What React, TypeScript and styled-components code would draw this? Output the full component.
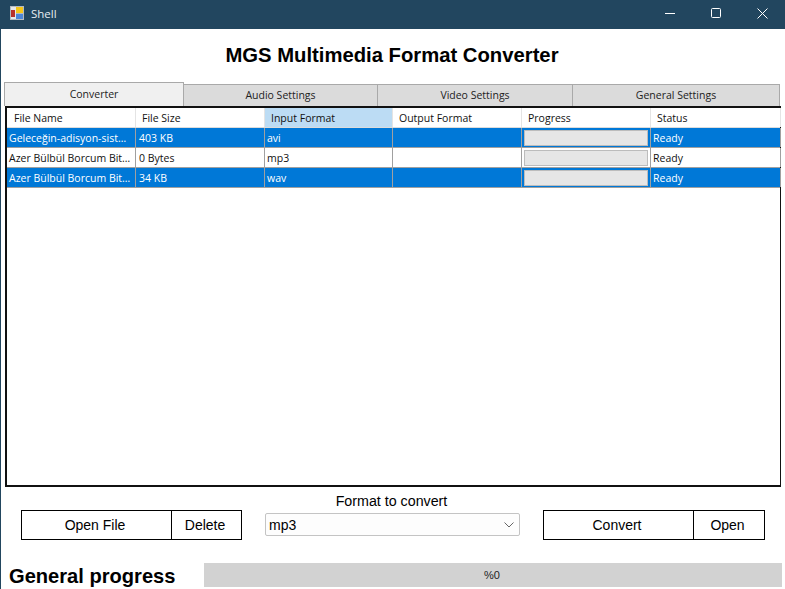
import React from "react";
import styled, { createGlobalStyle } from "styled-components";

const COLUMNS = [
  { title: "File Name", width: 129 },
  { title: "File Size", width: 129 },
  { title: "Input Format", width: 128, sorted: true },
  { title: "Output Format", width: 129 },
  { title: "Progress", width: 129 },
  { title: "Status", width: 130 },
];

const ROWS = [
  { name: "Geleceğin-adisyon-sist…", size: "403 KB", format: "avi", selected: true },
  { name: "Azer Bülbül Borcum Bit…", size: "0 Bytes", format: "mp3", selected: false },
  { name: "Azer Bülbül Borcum Bit…", size: "34 KB", format: "wav", selected: true },
];

const TABS = [
  { label: "Converter", width: 180, active: true },
  { label: "Audio Settings", width: 195 },
  { label: "Video Settings", width: 196 },
  { label: "General Settings", width: 208 },
];

const GRID_TEMPLATE = COLUMNS.map((c) => `${c.width}px`).join(" ");

const GlobalStyle = createGlobalStyle`
  html, body {
    margin: 0;
    padding: 0;
    background: #fff;
  }
  * {
    box-sizing: border-box;
  }
`;

const Win = styled.div`
  width: 785px;
  height: 589px;
  display: flex;
  flex-direction: column;
  overflow: hidden;
  background: #fff;
  border-left: 1px solid #22465f;
  font-family: "Liberation Sans", Arial, sans-serif;
  color: #000;
`;

const TitleBar = styled.div`
  height: 29px;
  margin-left: -1px;
  flex-shrink: 0;
  display: flex;
  align-items: center;
  padding: 0 0 3px 10px;
  background: #22465f;
  color: #e8eef2;
  font-family: "Open Sans", sans-serif;
  font-size: 11.5px;
`;

const AppName = styled.span`
  margin-left: 7px;
  flex: 1;
`;

const WinButton = styled.div`
  width: 46px;
  height: 26px;
  display: flex;
  align-items: center;
  justify-content: center;
`;

const Heading = styled.h1`
  height: 53px;
  margin: 0;
  flex-shrink: 0;
  display: flex;
  align-items: center;
  justify-content: center;
  padding: 0 2px 1px 0;
  font-size: 20.25px;
  font-weight: 700;
`;

const TabStrip = styled.div`
  height: 24px;
  flex-shrink: 0;
  display: flex;
  align-items: flex-start;
  padding-left: 3px;
`;

const Tab = styled.div<{ $active?: boolean; $width: number }>`
  width: ${(p) => p.$width}px;
  height: ${(p) => (p.$active ? 24 : 22)}px;
  margin-top: ${(p) => (p.$active ? 0 : 2)}px;
  margin-left: ${(p) => (p.$active ? 0 : -1)}px;
  display: flex;
  align-items: center;
  justify-content: center;
  padding-bottom: 2px;
  background: ${(p) => (p.$active ? "#f0f0f0" : "#dbdbdb")};
  border: 1px solid #a9a9a9;
  border-bottom: none;
  font-family: "Open Sans", sans-serif;
  font-size: 10.5px;
  color: #222;
`;

const Grid = styled.div`
  width: 776px;
  height: 381px;
  margin-left: 4px;
  flex-shrink: 0;
  border: 2px solid #111;
  border-right-width: 1px;
  background: #fff;
  font-family: "Open Sans", sans-serif;
  font-size: 10.5px;
`;

const HeaderRow = styled.div`
  height: 20px;
  display: grid;
  grid-template-columns: ${GRID_TEMPLATE};
  border-bottom: 1px solid #dcdcdc;
`;

const HeaderCell = styled.div<{ $sorted?: boolean }>`
  display: flex;
  align-items: center;
  padding-left: 6px;
  background: ${(p) => (p.$sorted ? "#bcdcf4" : "#fff")};
  border-right: 1px solid #e4e4e4;
  color: #111;

  &:first-child {
    padding-left: 7px;
  }
`;

const DataRow = styled.div<{ $selected: boolean }>`
  height: 20px;
  display: grid;
  grid-template-columns: ${GRID_TEMPLATE};
  background: ${(p) => (p.$selected ? "#0078d7" : "#fff")};
  color: ${(p) => (p.$selected ? "#fff" : "#111")};
  border-bottom: 1px solid #a0a0a0;
`;

const DataCell = styled.div`
  display: flex;
  align-items: center;
  padding-left: 2px;
  overflow: hidden;
  white-space: nowrap;
  border-right: 1px solid #a0a0a0;

  &:nth-child(2) {
    padding-left: 3px;
  }
`;

const ProgressCell = styled(DataCell)`
  padding: 2px;
`;

const RowProgress = styled.div`
  width: 100%;
  height: 16px;
  background: #e6e6e6;
  border: 1px solid #bcbcbc;
`;

const Actions = styled.div`
  height: 76px;
  flex-shrink: 0;
  display: flex;
  align-items: flex-start;
  padding: 23px 0 0 20px;
`;

const ActionButton = styled.button<{ $width: number }>`
  width: ${(p) => p.$width}px;
  height: 30px;
  margin-right: -1px;
  padding: 0 3px 0 0;
  background: #fff;
  border: 1px solid #000;
  border-radius: 0;
  font-family: "Liberation Sans", Arial, sans-serif;
  font-size: 14px;
  color: #000;
`;

const FormatBox = styled.div`
  width: 255px;
  margin: -19px 23px 0 24px;
  display: flex;
  flex-direction: column;
  align-items: center;
`;

const FormatLabel = styled.label`
  height: 20px;
  padding-right: 2px;
  display: flex;
  align-items: center;
  font-size: 14.25px;
`;

const Combo = styled.div`
  width: 100%;
  height: 23px;
  margin-top: 2px;
  display: flex;
  align-items: center;
  justify-content: space-between;
  padding: 0 5px 0 3px;
  background: #fdfdfd;
  border: 1px solid #c4c4c4;
  border-radius: 2px;
  font-size: 14px;
`;

const Footer = styled.div`
  display: flex;
  align-items: center;
  height: 24px;
  padding-left: 8px;
`;

const FooterLabel = styled.div`
  width: 195px;
  padding-top: 2px;
  font-size: 20.1px;
  font-weight: 700;
  white-space: nowrap;
`;

const GeneralBar = styled.div`
  width: 578px;
  height: 24px;
  display: flex;
  align-items: center;
  justify-content: center;
  padding-right: 2px;
  background: #d2d2d2;
  font-size: 11px;
  color: #222;
`;

function AppIcon() {
  return (
    <svg width="14" height="14" viewBox="0 0 14 14">
      <rect x="0" y="0" width="14" height="14" fill="#b4bac0" />
      <rect x="1" y="1" width="5" height="12" fill="#e6e8ea" />
      <rect x="1" y="4" width="4" height="7" fill="#b8302a" />
      <rect x="6" y="1" width="7" height="6" fill="#f5c518" />
      <rect x="6" y="8" width="7" height="5" fill="#4c86d8" />
    </svg>
  );
}

export default function App() {
  return (
    <>
      <GlobalStyle />
      <Win>
        <TitleBar>
          <AppIcon />
          <AppName>Shell</AppName>
          <WinButton>
            <svg width="10" height="10" viewBox="0 0 10 10">
              <path d="M0 5.5H10" stroke="#fff" fill="none" />
            </svg>
          </WinButton>
          <WinButton>
            <svg width="10" height="10" viewBox="0 0 10 10">
              <rect x="0.5" y="0.5" width="9" height="9" rx="1" stroke="#fff" fill="none" />
            </svg>
          </WinButton>
          <WinButton>
            <svg width="11" height="11" viewBox="0 0 11 11">
              <path d="M0.5 0.5L10.5 10.5M10.5 0.5L0.5 10.5" stroke="#fff" fill="none" />
            </svg>
          </WinButton>
        </TitleBar>

        <Heading>MGS Multimedia Format Converter</Heading>

        <TabStrip>
          {TABS.map((t) => (
            <Tab key={t.label} $active={t.active} $width={t.width}>
              {t.label}
            </Tab>
          ))}
        </TabStrip>

        <Grid>
          <HeaderRow>
            {COLUMNS.map((c) => (
              <HeaderCell key={c.title} $sorted={c.sorted}>
                {c.title}
              </HeaderCell>
            ))}
          </HeaderRow>
          {ROWS.map((r, i) => (
            <DataRow key={i} $selected={r.selected}>
              <DataCell>{r.name}</DataCell>
              <DataCell>{r.size}</DataCell>
              <DataCell>{r.format}</DataCell>
              <DataCell />
              <ProgressCell>
                <RowProgress />
              </ProgressCell>
              <DataCell>Ready</DataCell>
            </DataRow>
          ))}
        </Grid>

        <Actions>
          <ActionButton $width={151}>Open File</ActionButton>
          <ActionButton $width={71}>Delete</ActionButton>
          <FormatBox>
            <FormatLabel>Format to convert</FormatLabel>
            <Combo>
              mp3
              <svg width="10" height="6" viewBox="0 0 10 6">
                <path d="M0.5 0.5L5 5L9.5 0.5" stroke="#666" fill="none" />
              </svg>
            </Combo>
          </FormatBox>
          <ActionButton $width={151}>Convert</ActionButton>
          <ActionButton $width={72}>Open</ActionButton>
        </Actions>

        <Footer>
          <FooterLabel>General progress</FooterLabel>
          <GeneralBar>%0</GeneralBar>
        </Footer>
      </Win>
    </>
  );
}
